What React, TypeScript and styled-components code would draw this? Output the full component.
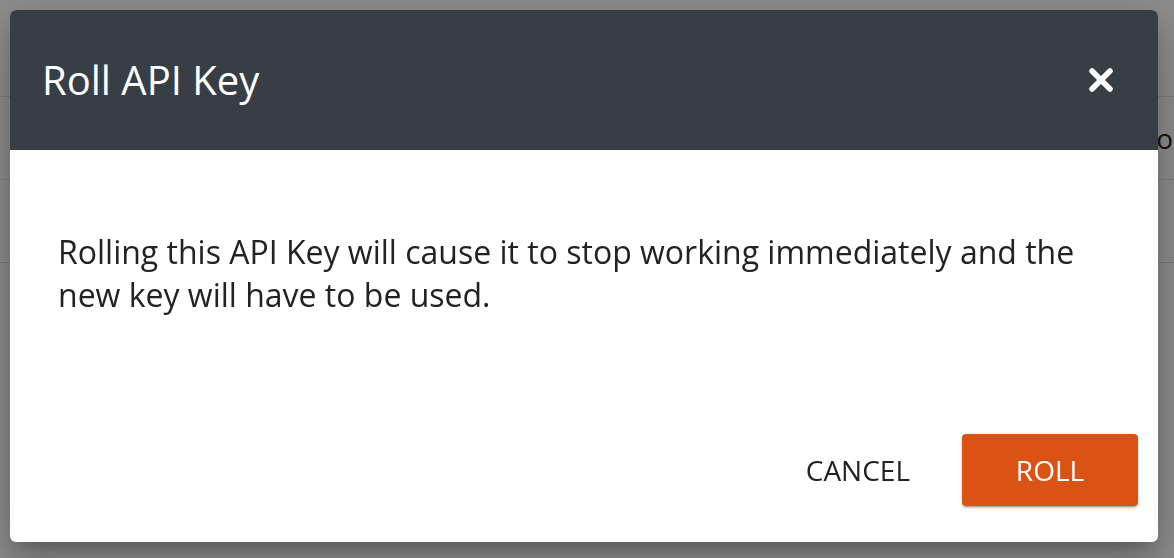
import React from 'react';
import styled, { createGlobalStyle } from 'styled-components';

const GlobalStyle = createGlobalStyle`
  html, body {
    margin: 0;
    padding: 0;
    background: #ffffff;
    font-family: 'Open Sans', 'Liberation Sans', sans-serif;
  }
`;

// page behind the dialog
const Page = styled.div`
  height: 558px;
  box-sizing: border-box;
  overflow: hidden;
  padding-top: 96px;
`;

const Row = styled.div`
  height: 82px;
  border-top: 1px solid #dcdcdc;
  display: flex;
  align-items: center;
  justify-content: flex-end;
  padding-right: 1px;
  font-size: 28px;
  color: #222;
`;

const Backdrop = styled.div`
  position: fixed;
  inset: 0;
  background: rgba(0, 0, 0, 0.45);
  padding: 10px 16px 16px 10px;
  box-sizing: border-box;
`;

const Dialog = styled.div`
  width: 1148px;
  height: 532px;
  background: #fff;
  border-radius: 6px;
  overflow: hidden;
  display: flex;
  flex-direction: column;
  box-shadow: 0 11px 15px -7px rgba(0, 0, 0, 0.2),
    0 24px 38px 3px rgba(0, 0, 0, 0.14), 0 9px 46px 8px rgba(0, 0, 0, 0.12);
`;

const Header = styled.div`
  height: 140px;
  flex-shrink: 0;
  background: #383e45;
  display: flex;
  align-items: center;
  justify-content: space-between;
  padding: 0 44px 0 32px;
`;

const Title = styled.h2`
  margin: 0 0 1px;
  font-size: 40px;
  font-weight: 400;
  color: #fff;
`;

const CloseButton = styled.button`
  border: none;
  background: none;
  padding: 0;
  width: 26px;
  height: 26px;
  cursor: pointer;
  display: flex;
`;

const Body = styled.div`
  flex: 1;
  padding: 80px 48px 0;
  font-size: 32px;
  line-height: 43px;
  color: #222;
`;

const Footer = styled.div`
  display: flex;
  justify-content: flex-end;
  align-items: center;
  gap: 52px;
  padding: 0 20px 36px;
`;

const TextButton = styled.button`
  border: none;
  background: none;
  font-family: inherit;
  font-size: 28px;
  color: #222;
  padding: 0;
  cursor: pointer;
`;

const RaisedButton = styled.button`
  width: 176px;
  height: 72px;
  border: none;
  border-radius: 4px;
  background: #da5214;
  color: #fff;
  font-family: inherit;
  font-size: 28px;
  cursor: pointer;
  box-shadow: 0 3px 1px -2px rgba(0, 0, 0, 0.2), 0 2px 2px 0 rgba(0, 0, 0, 0.14),
    0 1px 5px 0 rgba(0, 0, 0, 0.12);
`;

const App = () => (
  <>
    <GlobalStyle />
    <Page>
      <Row>Info</Row>
      <Row />
      <Row />
    </Page>
    <Backdrop>
      <Dialog>
        <Header>
          <Title>Roll API Key</Title>
          <CloseButton aria-label="Close">
            <svg width="26" height="26" viewBox="0 0 26 26">
              <path
                d="M4 4 L22 22 M22 4 L4 22"
                stroke="#fff"
                strokeWidth="5.5"
                strokeLinecap="round"
              />
            </svg>
          </CloseButton>
        </Header>
        <Body>
          Rolling this API Key will cause it to stop working immediately and the new key will
          have to be used.
        </Body>
        <Footer>
          <TextButton>CANCEL</TextButton>
          <RaisedButton>ROLL</RaisedButton>
        </Footer>
      </Dialog>
    </Backdrop>
  </>
);

export default App;
